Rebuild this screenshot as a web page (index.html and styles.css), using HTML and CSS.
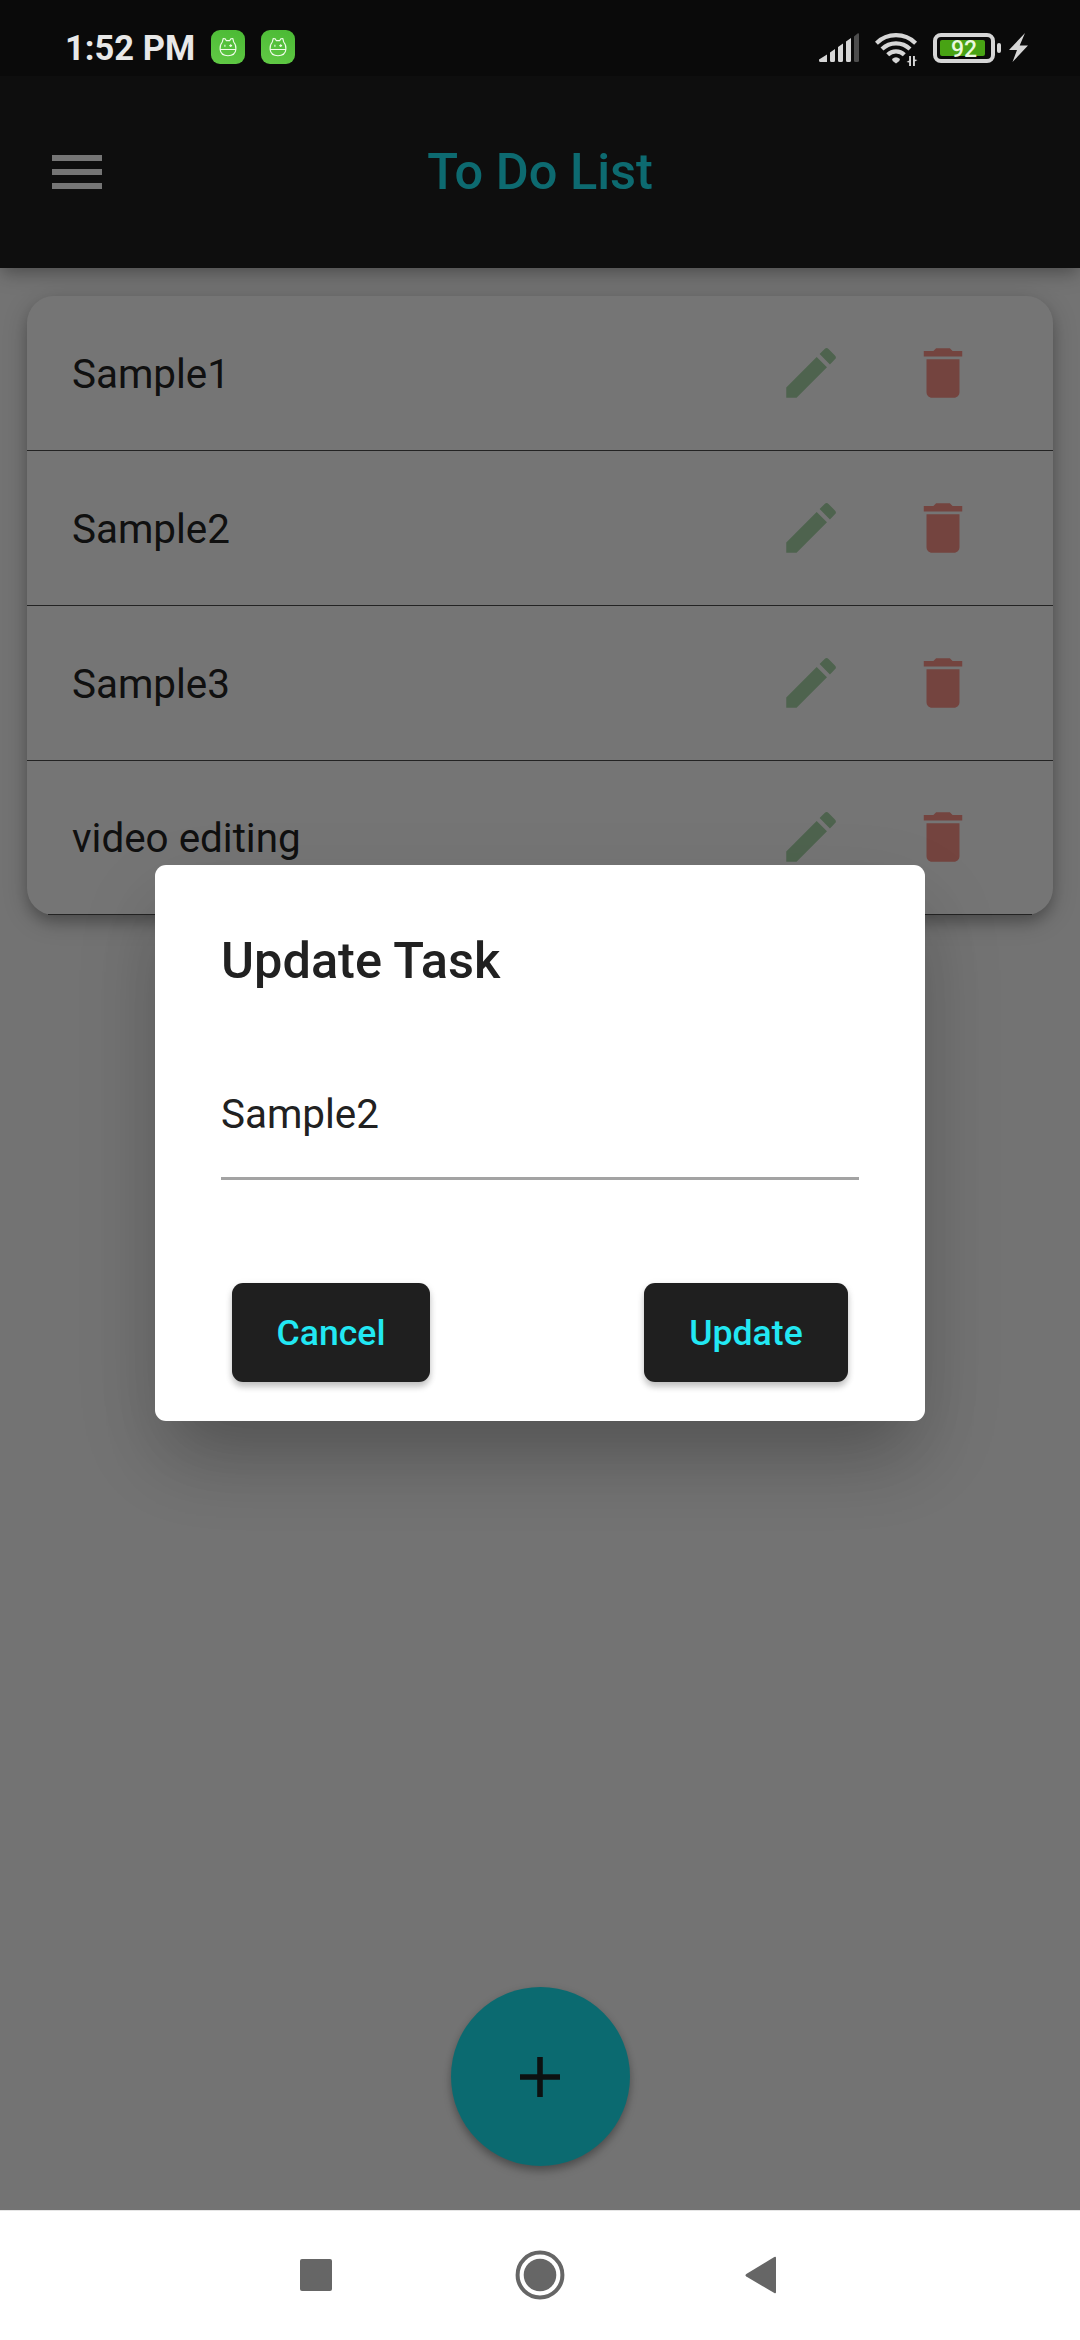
FILE: index.html
```html
<!DOCTYPE html>
<html lang="en">
<head>
<meta charset="utf-8">
<title>To Do List</title>
<link rel="stylesheet" href="styles.css">
</head>
<body>
<svg class="symbols" aria-hidden="true">
  <symbol id="edit" viewBox="0 0 24 24"><path d="M3 17.25V21h3.75L17.81 9.94l-3.75-3.75L3 17.25zM20.71 7.04a1 1 0 0 0 0-1.41l-2.34-2.34a1 1 0 0 0-1.41 0l-1.83 1.83 3.75 3.75 1.83-1.83z"/></symbol>
  <symbol id="delete" viewBox="0 0 24 24"><path d="M6 19c0 1.1.9 2 2 2h8c1.1 0 2-.9 2-2V7H6v12zM19 4h-3.5l-1-1h-5l-1 1H5v2h14V4z"/></symbol>
  <symbol id="bot" viewBox="0 0 34 34">
    <g fill="none" stroke="#effbe9" stroke-width="1.1" stroke-linejoin="round">
      <path d="M11.300 12 12.200 8.500l2 .2 1 1.900h3.600l1-1.900 2-.2.900 3.500c1.900 2.200 2.500 4.600 2.200 7.400-.4 3.800-3.300 6.300-7.900 6.300s-7.500-2.500-7.900-6.300c-.3-2.800.3-5.200 2.200-7.400z"/>
      <path d="M9 19.500h16M13.900 14.700v2M18.300 15.600h2.800M19.700 14.200v2.800"/>
    </g>
  </symbol>
</svg>
<div class="phone">
  <main class="app">
    <div class="status-space"></div>
    <header class="app-bar">
      <div class="menu"><i></i><i></i><i></i></div>
      <h1 class="app-title">To Do List</h1>
    </header>
    <ul class="tasks">
      <li class="task"><span class="task-name">Sample1</span><svg class="icon edit"><use href="#edit"/></svg><svg class="icon delete"><use href="#delete"/></svg></li>
      <li class="task"><span class="task-name">Sample2</span><svg class="icon edit"><use href="#edit"/></svg><svg class="icon delete"><use href="#delete"/></svg></li>
      <li class="task"><span class="task-name">Sample3</span><svg class="icon edit"><use href="#edit"/></svg><svg class="icon delete"><use href="#delete"/></svg></li>
      <li class="task"><span class="task-name">video editing</span><svg class="icon edit"><use href="#edit"/></svg><svg class="icon delete"><use href="#delete"/></svg></li>
    </ul>
    <div class="fab"><svg class="plus" viewBox="0 0 40 40"><path d="M17.200 0h5.600v17.200H40v5.600H22.800V40h-5.600V22.800H0v-5.600h17.200z"/></svg></div>
  </main>

  <div class="scrim">
    <section class="dialog">
      <h2 class="dialog-title">Update Task</h2>
      <div class="field">Sample2</div>
      <div class="actions">
        <div class="button cancel">Cancel</div>
        <div class="button update">Update</div>
      </div>
    </section>
  </div>

  <div class="status-bar">
    <span class="clock">1:52 PM</span>
    <span class="notice"><svg><use href="#bot"/></svg></span>
    <span class="notice"><svg><use href="#bot"/></svg></span>
    <svg class="signal" viewBox="0 0 40 29" fill="#d6d6d6">
      <path d="M0 26.500 8 21.500V29H1.500Q0 29 0 27.500zM11 19.500l5-3.500V27.500q0 1.500-1.500 1.500h-2Q11 29 11 27.500zM19 14l5-3.500V27.500q0 1.500-1.500 1.500h-2Q19 29 19 27.500zM27 8.500 32 5V27.500q0 1.500-1.500 1.500h-2Q27 29 27 27.500z"/>
      <path fill="#4d4d4d" d="M35 3.500 38.500.5Q40-.5 40 1.500v26q0 1.500-1.500 1.500h-2Q35 29 35 27.500z"/>
    </svg>
    <svg class="wifi" viewBox="0 0 43 33">
      <g fill="none" stroke="#d6d6d6" stroke-width="4.200">
        <path d="M1.400 10.200a28 28 0 0 1 39.200 0"/>
        <path d="M7 16a20 20 0 0 1 28 0"/>
        <path d="M12.700 21.700a12 12 0 0 1 16.600 0"/>
      </g>
      <path fill="#d6d6d6" d="M17 26q4-3.500 8 0l-.7 2L21 30.500 17.700 28z"/>
      <path fill="#d6d6d6" d="M36 23v10h-1.900v-3.500l-2.600-.6 2.600-1.500V23zM38 33V23h1.900v3.500l2.600.6-2.600 1.500V33z"/>
    </svg>
    <span class="battery"><span class="charge">92</span></span><i class="nub"></i>
    <svg class="bolt" viewBox="0 0 19 29"><path fill="#d6d6d6" d="M16 0 0 17h8L3.500 29 19 12.500h-8.300z"/></svg>
  </div>

  <nav class="nav-bar">
    <svg viewBox="0 0 50 50"><rect x="9" y="9" width="32" height="32" rx="2"/></svg>
    <svg viewBox="0 0 50 50"><circle cx="25" cy="25" r="16.300"/><circle cx="25" cy="25" r="22.400" fill="none" stroke="#666" stroke-width="4"/></svg>
    <svg viewBox="0 0 50 50"><path d="M7.300 24 35.300 7q1.700-.8 1.700 1v34q0 1.800-1.700 1L7.300 26.500q-1.800-1.200 0-2.500z"/></svg>
  </nav>
</div>
</body>
</html>
```
FILE: styles.css
```css
* { box-sizing: border-box; margin: 0; padding: 0; }
body { font-family: Roboto, "Liberation Sans", sans-serif; background: #fff; }
svg { display: block; flex: none; }
.symbols { position: absolute; width: 0; height: 0; }

.phone { position: relative; width: 1080px; height: 2340px; overflow: hidden; }
.app { display: flex; flex-direction: column; width: 1080px; height: 2210px; background: #fafafa; }

.status-space { height: 76px; background: #161616; position: relative; z-index: 1; }
.app-bar {
  display: grid;
  grid-template-columns: 52px 1fr 52px;
  align-items: center;
  height: 192px;
  background: #1f1f1f;
  box-shadow: 0 7px 14px -3px rgba(0, 0, 0, .22), 0 6px 22px rgba(0, 0, 0, .14);
}
.menu { grid-column: 1; width: 50px; margin-left: 52px; display: grid; gap: 8px; }
.menu i { height: 6px; background: #fff; }
.app-title {
  grid-column: 2;
  text-align: center;
  font-size: 50.500px;
  font-weight: 500;
  line-height: 60px;
  color: #1ee8f3;
}

.tasks {
  width: 1026px;
  margin: 28px auto 0;
  list-style: none;
  border-radius: 27px;
  background: #fff;
  box-shadow: 0 8px 14px -2px rgba(0, 0, 0, .22), 0 6px 26px rgba(0, 0, 0, .2);
}
.task {
  display: flex;
  align-items: center;
  height: 155px;
  padding: 0 77px 1px 45px;
  border-bottom: 1px solid #4d4d4d;
}
.task:last-child {
  height: 154px;
  padding-bottom: 2px;
  border-bottom: 0;
  background: linear-gradient(#4d4d4d, #4d4d4d) 50% 100% / 984px 1px no-repeat;
}
.task-name { flex: 1; padding-top: 4px; font-size: 40.400px; line-height: 48px; color: #242424; }
.icon { width: 66px; height: 66px; }
.icon.edit { fill: #aad8aa; margin-right: 66px; }
.icon.delete { fill: #fc948a; }

.fab {
  display: grid;
  place-items: center;
  width: 179px;
  height: 179px;
  margin: auto auto 44px;
  border-radius: 50%;
  background: #1ae8f3;
  box-shadow: 0 6px 10px -1px rgba(0, 0, 0, .26), 0 2px 8px rgba(0, 0, 0, .14);
}
.plus { width: 40px; height: 40px; fill: #1c2626; }

.scrim {
  position: absolute;
  inset: 0 0 130px;
  z-index: 2;
  display: grid;
  place-items: start center;
  padding-top: 865px;
  background: rgba(0, 0, 0, .54);
}
.dialog {
  width: 770px;
  height: 556px;
  padding: 66px 66px 0;
  border-radius: 11px;
  background: #fff;
  box-shadow: 0 46px 66px -18px rgba(0, 0, 0, .2), 0 34px 90px -4px rgba(0, 0, 0, .12);
}
.dialog-title { font-size: 50.500px; font-weight: 500; line-height: 60px; color: #212121; }
.field {
  height: 189px;
  padding-top: 100px;
  font-size: 40.400px;
  line-height: 48px;
  color: #212121;
  border-bottom: 3px solid #a3a3a3;
}
.actions { display: flex; justify-content: space-between; padding: 103px 11px 0; }
.button {
  height: 99px;
  padding-top: 1px;
  border-radius: 11px;
  background: #1f1f1f;
  color: #22e8f3;
  font-size: 35.600px;
  font-weight: 500;
  line-height: 98px;
  text-align: center;
  box-shadow: 0 5px 6px rgba(0, 0, 0, .2), 0 2px 8px rgba(0, 0, 0, .08);
}
.cancel { width: 198px; }
.update { width: 204px; }

.status-bar {
  position: absolute;
  inset: 0 0 auto;
  z-index: 3;
  display: flex;
  align-items: flex-start;
  height: 76px;
  padding: 0 52px 0 65px;
}
.clock { width: 146px; font-size: 34.500px; line-height: 40px; padding-top: 28px; font-weight: 700; color: #e8e8e8; white-space: nowrap; }
.notice { width: 34px; height: 34px; margin-top: 30px; border-radius: 9px; background: linear-gradient(200deg, #4ab934, #62ca46); }
.notice + .notice { margin-left: 16px; }
.notice svg { width: 34px; height: 34px; }
.signal { width: 40px; height: 29px; margin: 33px 16px 0 auto; }
.wifi { width: 43px; height: 33px; margin: 33px 15px 0 0; }
.battery { width: 62px; height: 30px; margin: 33px 2px 0 0; padding: 3px; border: 4px solid #d6d6d6; border-radius: 8px; }
.charge { display: block; width: 45px; height: 16px; border-radius: 2px; background: #48a314; color: #e9f9df; font-size: 23px; font-weight: 500; line-height: 19px; text-align: center; padding-left: 3px; }
.nub { width: 4px; height: 10px; margin: 43px 8px 0 0; border-radius: 2px; background: #d6d6d6; }
.bolt { width: 19px; height: 29px; margin-top: 33px; }

.nav-bar {
  display: flex;
  justify-content: center;
  gap: 174px;
  height: 130px;
  padding-top: 39px;
  border-top: 1px solid #e6e6e6;
  background: #fff;
}
.nav-bar svg { width: 50px; height: 50px; fill: #666; }
```
